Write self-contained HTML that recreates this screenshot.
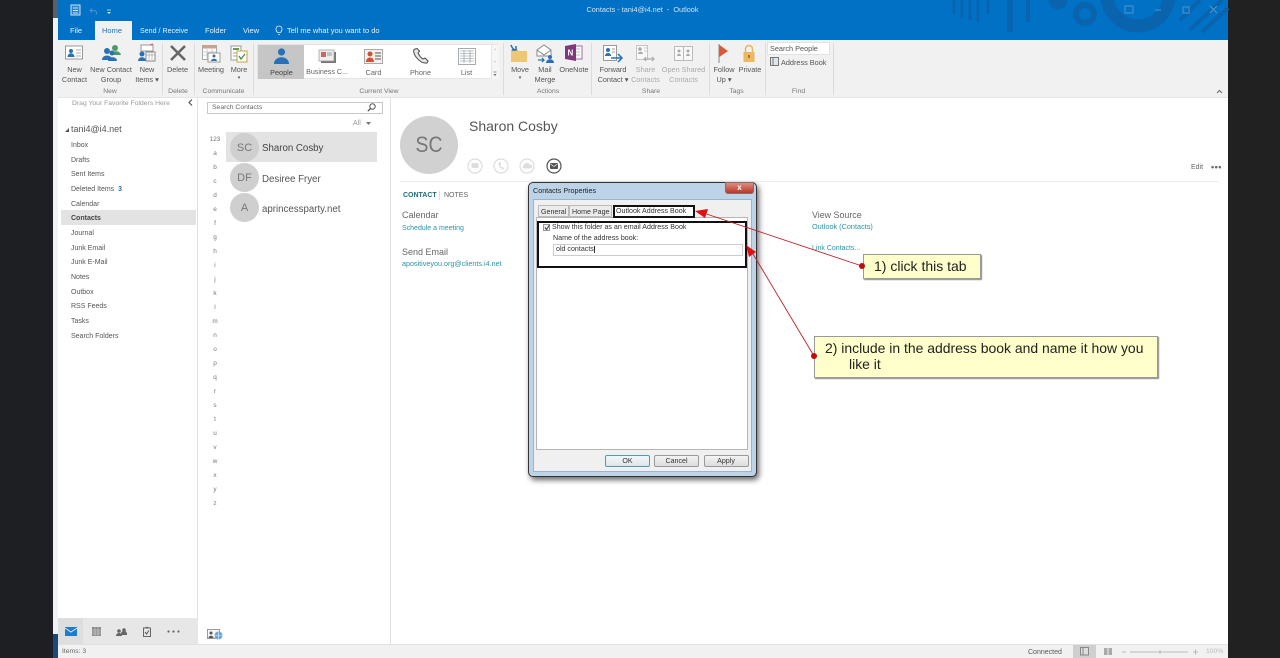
<!DOCTYPE html>
<html lang="en"><head><meta charset="utf-8"><title>Contacts</title>
<style>
html,body{margin:0;padding:0;background:#202020;}
body{width:1280px;height:658px;overflow:hidden;position:relative;font-family:"Liberation Sans",sans-serif;}
#p{position:absolute;left:0;top:0;width:1280px;height:658px;filter:blur(.35px);overflow:hidden;}
#p div,#p span.t{position:absolute;}
.t{position:absolute;white-space:nowrap;line-height:1;color:#555;}
.c{transform:translateX(-50%);text-align:center;}
.r{font-size:7.3px;color:#555;}
.g{font-size:6.8px;color:#777;top:89px;}
.n{font-size:7px;color:#555;left:71px;margin-top:1px;}
.a{font-size:6.4px;color:#777;transform:translateX(-50%);}
.d{font-size:7.1px;color:#333;}
svg{position:absolute;overflow:visible;}
</style></head><body><div id="p">
<div style="left:0;top:0;width:53px;height:658px;background:#1d1f22"></div>
<div style="left:1228px;top:0;width:52px;height:658px;background:#212121"></div>
<div style="left:53px;top:0;width:1175px;height:658px;background:#fff"></div>
<div style="left:53px;top:0;width:5px;height:18px;background:#55606a"></div>
<div style="left:53px;top:18px;width:5px;height:616px;background:#eef2f6"></div>
<div style="left:53px;top:634px;width:5px;height:24px;background:#1c4a78"></div>
<div style="left:58px;top:0;width:1170px;height:40px;background:#0071c5"></div>
<div style="left:58px;top:40px;width:1170px;height:57px;background:#f1f1f1"></div>
<div style="left:58px;top:97px;width:1170px;height:1px;background:#e4e4e4"></div>

<svg style="left:940px;top:0;" width="288" height="40" viewBox="0 0 288 40" fill="none" stroke="#0a64ad" stroke-width="5">
<path d="M14 0v14M22 0v18M30 0v20M38 0v22M48 0v14" stroke-width="3"/>
<path d="M70 0v32" stroke-width="6"/><path d="M88 0v22" stroke-width="4"/>
<circle cx="145" cy="14" r="9" stroke-width="6"/><circle cx="118" cy="0" r="7" fill="#0a64ad"/>
<circle cx="198" cy="-5" r="31" stroke-width="13"/><path d="M250 30L282 0M262 32L288 8M240 20L260 0" stroke-width="4"/>
</svg>

<svg style="left:69px;top:3px" width="50" height="14" viewBox="0 0 50 14" fill="none" stroke="#cfe3f4" stroke-width="1">
<rect x="2" y="2" width="9" height="10" fill="#2a83cb"/><path d="M4 5h5M4 7.500h5M4 10h5"/>
<path d="M23 5.500l-2 2 2 2M21.500 7.500h4a3 3 0 0 1 2 4" stroke="#4f95d0"/>
<path d="M38 9l2 2 2-2z" fill="#d9e9f6" stroke="none"/><path d="M38 7h4" stroke-width=".8"/>
</svg>
<span class="t c" style="left:642.500px;top:6px;font-size:7.300px;color:#cfe3f4">Contacts - tani4@i4.net&nbsp; -&nbsp; Outlook</span>
<svg style="left:1115px;top:3px" width="104" height="14" viewBox="0 0 104 14" fill="none" stroke="#4f95d0" stroke-width="1">
<rect x="10" y="3" width="8" height="7"/><path d="M40 7h6"/><rect x="68" y="4" width="6" height="6"/><path d="M95 3l7 7M102 3l-7 7"/>
</svg>

<div style="left:95px;top:21px;width:37px;height:19px;background:#f1f1f1"></div>
<span class="t" style="left:70px;top:27px;font-size:7.500px;color:#e8f2fa">File</span>
<span class="t" style="left:102px;top:27px;font-size:7.500px;color:#1f6fb5">Home</span>
<span class="t" style="left:140px;top:27.500px;font-size:7.100px;color:#e8f2fa">Send / Receive</span>
<span class="t" style="left:205px;top:27px;font-size:7.500px;color:#e8f2fa">Folder</span>
<span class="t" style="left:243px;top:27px;font-size:7.500px;color:#e8f2fa">View</span>
<svg style="left:275px;top:25px" width="8" height="11" viewBox="0 0 8 11" fill="none" stroke="#e8f2fa" stroke-width=".8"><path d="M2.500 7.500C1 6 1 4.800 1 4a3 3 0 0 1 6 0c0 .8 0 2-1.500 3.500zM3 9.500h2"/></svg>
<span class="t" style="left:287px;top:27px;font-size:7.500px;color:#e8f2fa">Tell me what you want to do</span>

<!-- ribbon separators -->
<div style="left:162px;top:43px;width:1px;height:52px;background:#dcdcdc"></div>
<div style="left:194px;top:43px;width:1px;height:52px;background:#dcdcdc"></div>
<div style="left:253px;top:43px;width:1px;height:52px;background:#dcdcdc"></div>
<div style="left:503px;top:43px;width:1px;height:52px;background:#dcdcdc"></div>
<div style="left:591px;top:43px;width:1px;height:52px;background:#dcdcdc"></div>
<div style="left:709px;top:43px;width:1px;height:52px;background:#dcdcdc"></div>
<div style="left:765px;top:43px;width:1px;height:52px;background:#dcdcdc"></div>
<div style="left:833px;top:43px;width:1px;height:52px;background:#dcdcdc"></div>

<!-- ribbon icons -->
<svg style="left:65px;top:45px" width="18" height="16" viewBox="0 0 18 16"><rect x=".5" y="1" width="17" height="13" fill="#fff" stroke="#999"/><circle cx="6" cy="6" r="2" fill="#2a70b5"/><path d="M2.500 12c0-5 7-5 7 0z" fill="#2a70b5"/><path d="M11 5h5M11 8h5M11 11h5" stroke="#aaa"/></svg>
<svg style="left:101px;top:44px" width="21" height="18" viewBox="0 0 21 18"><circle cx="6" cy="7" r="3" fill="#2a70b5"/><path d="M1 16c0-6 10-6 10 0z" fill="#2a70b5"/><circle cx="14" cy="4" r="3" fill="#4a9a6a"/><path d="M10 11c1-5 9-5 10 0z" fill="#4a9a6a"/><circle cx="11" cy="9" r="2.500" fill="#2a70b5"/><path d="M7 17c0-5 9-5 9 0z" fill="#2a70b5"/></svg>
<svg style="left:137px;top:44px" width="19" height="19" viewBox="0 0 19 19"><rect x="4" y="1" width="12" height="6" fill="#fff" stroke="#999"/><path d="M13 1l3 -1" stroke="#c56"/><circle cx="5" cy="10" r="2.500" fill="#2a70b5"/><path d="M1 17c0-5 8-5 8 0z" fill="#2a70b5"/><rect x="9" y="8" width="9" height="9" fill="#fff" stroke="#888"/><path d="M9 11h9M12 8v9M15 8v9" stroke="#aaa" stroke-width=".7"/></svg>
<svg style="left:169px;top:44px" width="18" height="18" viewBox="0 0 18 18"><path d="M2 2l14 14M16 2L2 16" stroke="#666" stroke-width="2.600"/></svg>
<svg style="left:202px;top:45px" width="19" height="18" viewBox="0 0 19 18"><rect x=".5" y=".5" width="14" height="14" fill="#fff" stroke="#aaa"/><rect x=".5" y=".5" width="14" height="3" fill="#c9a38a"/><path d="M1 7h13M1 10h13M5 4v10M10 4v10" stroke="#c5c5c5" stroke-width=".8"/><rect x="6" y="8" width="12" height="9" fill="#fff" stroke="#999"/><circle cx="12" cy="11" r="1.500" fill="#2a70b5"/><path d="M9 16c0-3 6-3 6 0z" fill="#2a70b5"/></svg>
<svg style="left:230px;top:44px" width="18" height="19" viewBox="0 0 18 19"><rect x="1" y="2" width="10" height="14" fill="#fff" stroke="#999"/><path d="M3 5h6" stroke="#6a9a5a" stroke-width="2"/><path d="M3 9h5M3 12h5" stroke="#8aa"/><rect x="7" y="7" width="10" height="11" fill="#fff" stroke="#c9a53a"/><path d="M9 12l2 3 4-5" stroke="#4a8a4a" fill="none" stroke-width="1.300"/></svg>

<!-- gallery -->
<div style="left:257px;top:44px;width:241px;height:35px;background:#fff;border:1px solid #e4e4e4;box-sizing:border-box"></div>
<div style="left:258px;top:45px;width:46px;height:34px;background:#c6c6c6"></div>
<svg style="left:274px;top:48px" width="15" height="17" viewBox="0 0 15 17"><circle cx="7.500" cy="4" r="3.600" fill="#2a70b5"/><path d="M0 16c0-9 15-9 15 0z" fill="#2a70b5"/></svg>
<span class="t c" style="left:281.500px;top:69px;font-size:7.300px;color:#444">People</span>
<svg style="left:318px;top:49px" width="19" height="15" viewBox="0 0 19 15"><rect x="3" y="3" width="15" height="11" fill="#777"/><rect x="1" y="1" width="15" height="11" fill="#eee" stroke="#999" stroke-width=".7"/><rect x="3" y="3" width="5" height="5" fill="#c66"/><path d="M9 4h5M9 6h5" stroke="#999"/></svg>
<span class="t c" style="left:327px;top:69px;font-size:7.100px;color:#666">Business C...</span>
<svg style="left:364px;top:49px" width="19" height="15" viewBox="0 0 19 15"><rect x=".5" y=".5" width="18" height="14" fill="#f5f0ea" stroke="#aaa"/><circle cx="6" cy="5" r="2.500" fill="#d05030"/><path d="M2 13c0-6 8-6 8 0z" fill="#d05030"/><path d="M11 4h6M11 7h6M11 10h6" stroke="#777" stroke-width="1.200"/></svg>
<span class="t c" style="left:373.500px;top:69px;font-size:7.300px;color:#666">Card</span>
<svg style="left:412px;top:48px" width="17" height="17" viewBox="0 0 17 17"><path d="M2 1.500C0 6 8 16 15 15l1-2-3-3-2 1C9 10 7 7 6 5l1.500-2L5 .5z" fill="#e8e8e8" stroke="#555" stroke-width="1.100"/></svg>
<span class="t c" style="left:420.500px;top:69px;font-size:7.300px;color:#666">Phone</span>
<svg style="left:458px;top:48px" width="18" height="17" viewBox="0 0 18 17"><rect x=".5" y=".5" width="17" height="16" fill="#fff" stroke="#aaa"/><path d="M2 3h14M2 5.500h14M2 8h14M2 10.500h14M2 13h14" stroke="#b8c4d0"/><path d="M6 2v13M12 2v13" stroke="#999" stroke-width=".7"/></svg>
<span class="t c" style="left:466.500px;top:69px;font-size:7.300px;color:#666">List</span>
<div style="left:491px;top:45px;width:7px;height:34px;background:#f6f6f6;border-left:1px solid #e4e4e4"></div>
<svg style="left:492px;top:46px" width="6" height="33" viewBox="0 0 6 33"><path d="M1.500 4l1.500-1.500L4.500 4zM1.500 15L3 16.500 4.500 15z" fill="#ccc"/><path d="M1.500 26h3" stroke="#666" stroke-width=".7"/><path d="M1.500 28L3 30l1.500-2z" fill="#666"/></svg>

<!-- Actions etc icons -->
<svg style="left:508px;top:43px" width="22" height="20" viewBox="0 0 22 20"><path d="M3 6h6l2 2h8v11H3z" fill="#eec774"/><path d="M3 2c1 3 3 5 5 5M8 3v4H4" stroke="#2a70b5" stroke-width="1.500" fill="none"/></svg>
<svg style="left:535px;top:44px" width="22" height="20" viewBox="0 0 22 20" fill="none"><path d="M2 6l7-5 7 5v6H2z" fill="#fff" stroke="#888"/><path d="M2 6l7 5 7-5" stroke="#888"/><path d="M3 16h6m-2-2l2 2-2 2" stroke="#2a70b5" stroke-width="1.300"/><circle cx="15" cy="13" r="2" fill="#2a70b5"/><path d="M11 19c0-5 8-5 8 0z" fill="#2a70b5"/></svg>
<svg style="left:564px;top:44px" width="19" height="17" viewBox="0 0 19 17"><rect x="9" y="2" width="9" height="13" fill="#fff" stroke="#a6a"/><path d="M11 5h5M11 8h5M11 11h5" stroke="#bbb"/><path d="M1 2l11-2v17L1 15z" fill="#80397b"/><text x="3.500" y="11.500" font-size="8" font-weight="bold" fill="#fff" font-family="Liberation Sans">N</text></svg>
<svg style="left:603px;top:45px" width="21" height="18" viewBox="0 0 21 18" fill="none"><rect x=".5" y=".5" width="13" height="15" fill="#fff" stroke="#999"/><circle cx="5" cy="5" r="2" fill="#2a70b5"/><path d="M2 11c0-4 6-4 6 0z" fill="#2a70b5"/><path d="M9 4h3M9 7h3" stroke="#999"/><path d="M8 13h11m-4-4l4 4-4 4" stroke="#2a70b5" stroke-width="1.500"/></svg>
<svg style="left:636px;top:45px" width="20" height="18" viewBox="0 0 20 18" fill="none"><rect x=".5" y=".5" width="11" height="14" fill="#f8f8f8" stroke="#c5c5c5"/><circle cx="4" cy="4" r="1.800" fill="#aaa"/><path d="M2 9c0-3 5-3 5 0z" fill="#aaa"/><path d="M8 3h3M8 6h3" stroke="#ccc"/><path d="M8 14h10m-8-2l-2 2 2 2m6-4l2 2-2 2" stroke="#aaa" stroke-width="1.200"/></svg>
<svg style="left:674px;top:45px" width="19" height="17" viewBox="0 0 19 17" fill="none"><path d="M.5 1.500h8.500l.5 1 .5-1H18.500v14H.5z" fill="#f8f8f8" stroke="#bbb"/><path d="M9.500 2.500v13" stroke="#bbb"/><circle cx="5" cy="6" r="1.500" fill="#aaa"/><path d="M3 11c0-3 4-3 4 0z" fill="#aaa"/><circle cx="14" cy="6" r="1.500" fill="#aaa"/><path d="M12 11c0-3 4-3 4 0z" fill="#aaa"/></svg>
<svg style="left:716px;top:44px" width="15" height="19" viewBox="0 0 15 19"><path d="M3 0v19" stroke="#888"/><path d="M3.500 1L12 7l-8.500 6z" fill="#d9593a"/></svg>
<svg style="left:741px;top:44px" width="16" height="18" viewBox="0 0 16 18" fill="none"><path d="M4.500 8V5a3.500 3.500 0 0 1 7 0v3" stroke="#e8b45c" stroke-width="1.500"/><rect x="2.500" y="8" width="11" height="10" fill="#eeb860"/><rect x="7" y="11" width="2" height="3" fill="#a87a30"/></svg>

<!-- ribbon labels -->
<span class="t c r" style="left:74.500px;top:66px">New</span><span class="t c r" style="left:74.500px;top:76px">Contact</span>
<span class="t c r" style="left:111px;top:66px">New Contact</span><span class="t c r" style="left:111px;top:76px">Group</span>
<span class="t c r" style="left:147px;top:66px">New</span><span class="t c r" style="left:147px;top:76px">Items ▾</span>
<span class="t c r" style="left:177.500px;top:66px">Delete</span>
<span class="t c r" style="left:211px;top:66px">Meeting</span>
<span class="t c r" style="left:239px;top:66px">More</span><span class="t c r" style="left:239px;top:76px;font-size:5px">▾</span>
<span class="t c r" style="left:520px;top:66px">Move</span><span class="t c r" style="left:520px;top:76px;font-size:5px">▾</span>
<span class="t c r" style="left:545px;top:66px">Mail</span><span class="t c r" style="left:545px;top:76px">Merge</span>
<span class="t c r" style="left:574px;top:66px">OneNote</span>
<span class="t c r" style="left:613px;top:66px">Forward</span><span class="t c r" style="left:613px;top:76px">Contact ▾</span>
<span class="t c r" style="left:645.500px;top:66px;color:#aaa">Share</span><span class="t c r" style="left:645.500px;top:76px;color:#aaa">Contacts</span>
<span class="t c r" style="left:683.500px;top:66px;color:#aaa">Open Shared</span><span class="t c r" style="left:683.500px;top:76px;color:#aaa">Contacts</span>
<span class="t c r" style="left:724px;top:66px">Follow</span><span class="t c r" style="left:724px;top:76px">Up ▾</span>
<span class="t c r" style="left:750px;top:66px">Private</span>
<span class="t c g" style="left:110px">New</span>
<span class="t c g" style="left:178px">Delete</span>
<span class="t c g" style="left:223.500px">Communicate</span>
<span class="t c g" style="left:379px">Current View</span>
<span class="t c g" style="left:548px">Actions</span>
<span class="t c g" style="left:651px">Share</span>
<span class="t c g" style="left:736.500px">Tags</span>
<span class="t c g" style="left:798.500px">Find</span>
<div style="left:767px;top:42px;width:63px;height:13px;background:#fff;border:1px solid #e2e2e2;box-sizing:border-box"></div>
<span class="t r" style="left:770px;top:45px">Search People</span>
<svg style="left:770px;top:57px" width="9" height="9" viewBox="0 0 9 9"><rect x=".5" y=".5" width="8" height="8" fill="#dfe6ec" stroke="#777"/><path d="M3 1v7" stroke="#777"/></svg>
<span class="t r" style="left:781px;top:59px">Address Book</span>
<svg style="left:1216px;top:89px" width="7" height="5" viewBox="0 0 7 5"><path d="M1 4l2.500-2.500L6 4" stroke="#666" fill="none"/></svg>

<!-- nav pane -->
<div style="left:197px;top:98px;width:1px;height:546px;background:#e1e1e1"></div>
<span class="t" style="left:72px;top:101px;font-size:6.800px;color:#999">Drag Your Favorite Folders Here</span>
<svg style="left:188px;top:99px" width="5" height="7" viewBox="0 0 5 7"><path d="M4 .5L1 3.500 4 6.500" stroke="#555" fill="none" stroke-width="1.200"/></svg>
<svg style="left:64px;top:127px" width="6" height="6" viewBox="0 0 6 6"><path d="M1 5l4-4v4z" fill="#555"/></svg>
<span class="t" style="left:71px;top:125px;font-size:9px;color:#555">tani4@i4.net</span>
<span class="t n" style="top:141px">Inbox</span>
<span class="t n" style="top:155.500px">Drafts</span>
<span class="t n" style="top:170px">Sent Items</span>
<span class="t n" style="top:185px">Deleted Items <b style="color:#1f6fb5;margin-left:2px">3</b></span>
<span class="t n" style="top:199.500px">Calendar</span>
<div style="left:61px;top:210px;width:135px;height:15px;background:#e3e3e3"></div>
<span class="t n" style="top:214px;font-weight:bold;color:#444">Contacts</span>
<span class="t n" style="top:229px">Journal</span>
<span class="t n" style="top:243.500px">Junk Email</span>
<span class="t n" style="top:258px">Junk E-Mail</span>
<span class="t n" style="top:273px">Notes</span>
<span class="t n" style="top:287.500px">Outbox</span>
<span class="t n" style="top:302px">RSS Feeds</span>
<span class="t n" style="top:317px">Tasks</span>
<span class="t n" style="top:332px">Search Folders</span>

<div style="left:58px;top:618px;width:140px;height:26px;background:#e7e7e7"></div>
<div style="left:58px;top:618px;width:25px;height:26px;background:#dedede"></div>
<svg style="left:65px;top:627px" width="12" height="9" viewBox="0 0 12 9"><rect width="12" height="9" fill="#1c7cd0"/><path d="M0 1l6 4 6-4" stroke="#e7e7e7" fill="none"/></svg>
<svg style="left:92px;top:627px" width="9" height="9" viewBox="0 0 9 9"><rect width="9" height="9" fill="#888"/><path d="M0 3h9M0 5h9M0 7h9M3 0v9M6 0v9" stroke="#ddd" stroke-width=".5"/></svg>
<svg style="left:116px;top:628px" width="11" height="8" viewBox="0 0 11 8"><circle cx="3" cy="3" r="1.800" fill="#666"/><circle cx="8" cy="2" r="1.800" fill="#666"/><path d="M0 8c0-4 6-4 6 0zM5 6c0-4 6-4 6 0v1H6z" fill="#666"/></svg>
<svg style="left:143px;top:627px" width="8" height="10" viewBox="0 0 8 10" fill="none"><rect x=".5" y="1" width="7" height="8.500" stroke="#666"/><path d="M2 5l1.500 2L6 3.500" stroke="#555"/><path d="M2.500 .5h3" stroke="#666" stroke-width="1.200"/></svg>
<svg style="left:167px;top:630px" width="13" height="3" viewBox="0 0 13 3"><circle cx="1.500" cy="1.500" r="1.100" fill="#666"/><circle cx="6.500" cy="1.500" r="1.100" fill="#666"/><circle cx="11.500" cy="1.500" r="1.100" fill="#666"/></svg>
<svg style="left:207px;top:629px" width="16" height="11" viewBox="0 0 16 11"><rect x=".5" y=".5" width="12" height="9" fill="#f5f5f5" stroke="#999"/><circle cx="4" cy="4" r="1.500" fill="#555"/><path d="M1.500 9c0-3 5-3 5 0z" fill="#555"/><circle cx="11.500" cy="6.500" r="4" fill="#6aa6d8"/><path d="M7.500 6.500h8M11.500 2.500v8" stroke="#e8f2fa" stroke-width=".6"/></svg>

<!-- contact list -->
<div style="left:207px;top:102px;width:176px;height:12px;background:#fff;border:1px solid #c8c8c8;box-sizing:border-box"></div>
<span class="t" style="left:212px;top:105px;font-size:6.800px;color:#666">Search Contacts</span>
<svg style="left:367px;top:103px" width="9" height="9" viewBox="0 0 9 9" fill="none" stroke="#555"><circle cx="5.500" cy="3.500" r="2.700"/><path d="M3.500 5.500L.8 8.200" stroke-width="1.300"/></svg>
<span class="t" style="left:353px;top:119.500px;font-size:7px;color:#999">All</span>
<svg style="left:366px;top:122px" width="5" height="3" viewBox="0 0 5 3"><path d="M0 0h5L2.500 3z" fill="#777"/></svg>
<span class="t a" style="left:215px;top:136.500px">123</span>
<span class="t a" style="left:215px;top:151px">a</span><span class="t a" style="left:215px;top:165px">b</span><span class="t a" style="left:215px;top:179px">c</span><span class="t a" style="left:215px;top:193px">d</span><span class="t a" style="left:215px;top:207px">e</span><span class="t a" style="left:215px;top:221px">f</span><span class="t a" style="left:215px;top:235px">g</span><span class="t a" style="left:215px;top:249px">h</span><span class="t a" style="left:215px;top:263px">i</span><span class="t a" style="left:215px;top:277px">j</span><span class="t a" style="left:215px;top:291px">k</span><span class="t a" style="left:215px;top:305px">l</span><span class="t a" style="left:215px;top:319px">m</span><span class="t a" style="left:215px;top:333px">n</span><span class="t a" style="left:215px;top:347px">o</span><span class="t a" style="left:215px;top:361px">p</span><span class="t a" style="left:215px;top:375px">q</span><span class="t a" style="left:215px;top:389px">r</span><span class="t a" style="left:215px;top:403px">s</span><span class="t a" style="left:215px;top:417px">t</span><span class="t a" style="left:215px;top:431px">u</span><span class="t a" style="left:215px;top:445px">v</span><span class="t a" style="left:215px;top:459px">w</span><span class="t a" style="left:215px;top:473px">x</span><span class="t a" style="left:215px;top:487px">y</span><span class="t a" style="left:215px;top:501px">z</span>
<div style="left:226px;top:132px;width:151px;height:30px;background:#e3e3e3"></div>
<div style="left:230px;top:133px;width:29px;height:29px;border-radius:50%;background:#cfcfcf"></div>
<div style="left:230px;top:163px;width:29px;height:29px;border-radius:50%;background:#cfcfcf"></div>
<div style="left:230px;top:193px;width:29px;height:29px;border-radius:50%;background:#cfcfcf"></div>
<span class="t c" style="left:244.500px;top:142.500px;font-size:11px;color:#777">SC</span>
<span class="t c" style="left:244.500px;top:172.500px;font-size:11px;color:#777">DF</span>
<span class="t c" style="left:244.500px;top:202.500px;font-size:11px;color:#777">A</span>
<span class="t" style="left:262px;top:144px;font-size:9.700px;color:#444">Sharon Cosby</span>
<span class="t" style="left:262px;top:174.500px;font-size:9.700px;color:#555">Desiree Fryer</span>
<span class="t" style="left:262px;top:205px;font-size:9.700px;color:#555">aprincessparty.net</span>

<!-- reading pane -->
<div style="left:390px;top:98px;width:1px;height:546px;background:#e1e1e1"></div>
<div style="left:400px;top:116px;width:58px;height:58px;border-radius:50%;background:#d1d1d1"></div>
<span class="t" style="left:429px;top:134px;font-size:22px;color:#777;transform:translateX(-50%) scaleX(.88)">SC</span>
<span class="t" style="left:469px;top:119px;font-size:14px;color:#555">Sharon Cosby</span>
<svg style="left:467px;top:158px" width="96" height="16" viewBox="0 0 96 16" fill="none">
<circle cx="8" cy="8" r="7" stroke="#ddd" stroke-width="1.200"/><rect x="4.500" y="5" width="7" height="5" rx="1" fill="#ddd"/>
<circle cx="34" cy="8" r="7" stroke="#ddd" stroke-width="1.200"/><path d="M31.500 4.500c0 4 2 6.500 5 7l1-1.500-2-1-1 .5c-.8-.8-1-1.500-1-2.500l.8-.7-.7-2.300z" fill="#ddd"/>
<circle cx="60" cy="8" r="7" stroke="#ddd" stroke-width="1.200"/><path d="M56.500 10.500a2 2 0 0 1 .5-3.500 3 3 0 0 1 5.500-.5 2 2 0 0 1 1 4z" fill="#ddd"/>
<circle cx="87" cy="8" r="7" stroke="#555" stroke-width="1.200"/><rect x="83" y="5" width="8" height="6" rx="1" fill="#555"/><path d="M83.500 6l3.500 2.500L90.500 6" stroke="#fff" stroke-width=".7"/>
</svg>
<span class="t" style="left:1191px;top:164px;font-size:7px;color:#666">Edit</span>
<span class="t" style="left:1211px;top:163px;font-size:9px;font-weight:bold;color:#666;letter-spacing:.5px">•••</span>
<div style="left:400px;top:181px;width:818px;height:1px;background:#ededed"></div>
<span class="t" style="left:403px;top:192px;font-size:7px;font-weight:bold;color:#1d6f7d">CONTACT</span>
<div style="left:439px;top:191px;width:1px;height:9px;background:#ddd"></div>
<span class="t" style="left:444px;top:192px;font-size:7px;color:#666">NOTES</span>
<span class="t" style="left:402px;top:211px;font-size:9px;color:#666">Calendar</span>
<span class="t" style="left:402px;top:225px;font-size:7px;color:#2a93a8">Schedule a meeting</span>
<span class="t" style="left:402px;top:248px;font-size:9px;color:#666">Send Email</span>
<span class="t" style="left:402px;top:260px;font-size:7.200px;color:#2a93a8">apositiveyou.org@clients.i4.net</span>
<span class="t" style="left:812px;top:211px;font-size:8.900px;color:#666">View Source</span>
<span class="t" style="left:812px;top:223px;font-size:7.300px;color:#2a93a8">Outlook (Contacts)</span>
<span class="t" style="left:812px;top:245px;font-size:7px;color:#2a93a8">Link Contacts...</span>

<!-- dialog -->
<div style="left:528px;top:182px;width:229px;height:295px;border-radius:5px;background:#bcd3e8;border:1px solid #333;box-sizing:border-box;box-shadow:2px 3px 6px rgba(0,0,0,.6)"></div>
<div style="left:533px;top:199px;width:219px;height:273px;background:#f0f0f0;border:1px solid #9db3c6;box-sizing:border-box"></div>
<span class="t" style="left:533px;top:187px;font-size:7.200px;color:#222">Contacts Properties</span>
<div style="left:725px;top:182px;width:29px;height:12px;background:linear-gradient(#dd8d7e,#b8372a);border-radius:0 0 3px 3px;border:1px solid #8a6a6a;box-sizing:border-box"></div>
<span class="t c" style="left:739.500px;top:184px;font-size:8px;font-weight:bold;color:#fff">x</span>
<div style="left:536px;top:217px;width:212px;height:233px;background:#fff;border:1px solid #b5b5b5;box-sizing:border-box"></div>
<div style="left:538px;top:205px;width:31px;height:12px;background:#ececec;border:1px solid #bbb;box-sizing:border-box"></div>
<div style="left:569px;top:205px;width:43px;height:12px;background:#ececec;border:1px solid #bbb;box-sizing:border-box"></div>
<span class="t d" style="left:541px;top:208.500px">General</span>
<span class="t d" style="left:572px;top:208.500px">Home Page</span>
<div style="left:613px;top:205px;width:82px;height:13px;background:#fff;border:2px solid #111;box-sizing:border-box"></div>
<span class="t d" style="left:616px;top:208px">Outlook Address Book</span>
<div style="left:537px;top:221px;width:210px;height:47px;border:2px solid #111;box-sizing:border-box"></div>
<div style="left:543px;top:224px;width:7px;height:7px;background:#eee;border:1px solid #999;box-sizing:border-box"></div>
<svg style="left:544px;top:224px" width="7" height="7" viewBox="0 0 7 7"><path d="M1 3.500l1.500 2L5.500 1" stroke="#445" fill="none" stroke-width="1.100"/></svg>
<span class="t d" style="left:552px;top:224px">Show this folder as an email Address Book</span>
<span class="t d" style="left:553px;top:235px">Name of the address book:</span>
<div style="left:553px;top:244px;width:190px;height:12px;background:#fff;border:1px solid #ccc;box-sizing:border-box"></div>
<span class="t d" style="left:556px;top:246px;border-right:1px solid #333">old contacts</span>
<div style="left:605px;top:455px;width:45px;height:12px;background:linear-gradient(#f2f6f9,#dfe6ea);border:1px solid #4e9ab8;border-radius:2px;box-sizing:border-box"></div>
<div style="left:654px;top:455px;width:45px;height:12px;background:linear-gradient(#f4f4f4,#dcdcdc);border:1px solid #9a9a9a;border-radius:2px;box-sizing:border-box"></div>
<div style="left:704px;top:455px;width:45px;height:12px;background:linear-gradient(#f4f4f4,#dcdcdc);border:1px solid #9a9a9a;border-radius:2px;box-sizing:border-box"></div>
<span class="t c d" style="left:627.500px;top:458px">OK</span>
<span class="t c d" style="left:676.500px;top:458px">Cancel</span>
<span class="t c d" style="left:726px;top:458px">Apply</span>

<!-- callouts -->
<div style="left:863px;top:254px;width:118px;height:25px;background:#ffffcc;border:1px solid #999;box-sizing:border-box;box-shadow:1px 1px 1px #888"></div>
<span class="t" style="left:874px;top:259px;font-size:14px;color:#222">1) click this tab</span>
<div style="left:814px;top:336px;width:344px;height:42px;background:#ffffcc;border:1px solid #999;box-sizing:border-box;box-shadow:1px 1px 1px #888"></div>
<span class="t" style="left:825px;top:342px;font-size:13.950px;color:#222">2) include in the address book and name it how you</span>
<span class="t" style="left:849px;top:358px;font-size:13.950px;color:#222">like it</span>
<svg style="left:0;top:0" width="1280" height="658" viewBox="0 0 1280 658" fill="none">
<path d="M862 266L705 213.500M814 356L753 254" stroke="#c0202a" stroke-width=".9"/>
<path d="M695 211l13-2-3 9z" fill="#dd1111"/>
<path d="M746 245l10 7-7 5z" fill="#dd1111"/>
<circle cx="862" cy="266" r="3" fill="#c00c0c"/><circle cx="814" cy="356" r="3" fill="#c00c0c"/>
</svg>

<!-- status bar -->
<div style="left:58px;top:644px;width:1170px;height:14px;background:#f1f1f1;border-top:1px solid #e2e2e2;box-sizing:border-box"></div>
<span class="t" style="left:62px;top:648.500px;font-size:6.800px;color:#666">Items: 3</span>
<span class="t" style="left:1028px;top:649px;font-size:7px;color:#555">Connected</span>
<div style="left:1073px;top:645px;width:23px;height:13px;background:#cfcfcf"></div>
<svg style="left:1080px;top:647px" width="36" height="10" viewBox="0 0 36 10" fill="none"><rect x=".5" y=".5" width="8" height="7.500" fill="#ddd" stroke="#888"/><path d="M3 1v7" stroke="#888"/><rect x="24" y="1" width="8" height="7" fill="#aaa"/><path d="M28 1v7" stroke="#eee"/></svg>
<svg style="left:1122px;top:648px" width="76" height="8" viewBox="0 0 76 8"><path d="M0 4h4M71 4h5M73.500 1.500v5M8 4h58M38 2v4" stroke="#aaa" stroke-width=".8"/></svg>
<span class="t" style="left:1206px;top:649px;font-size:6.800px;color:#bbb">100%</span>
</div></body></html>
